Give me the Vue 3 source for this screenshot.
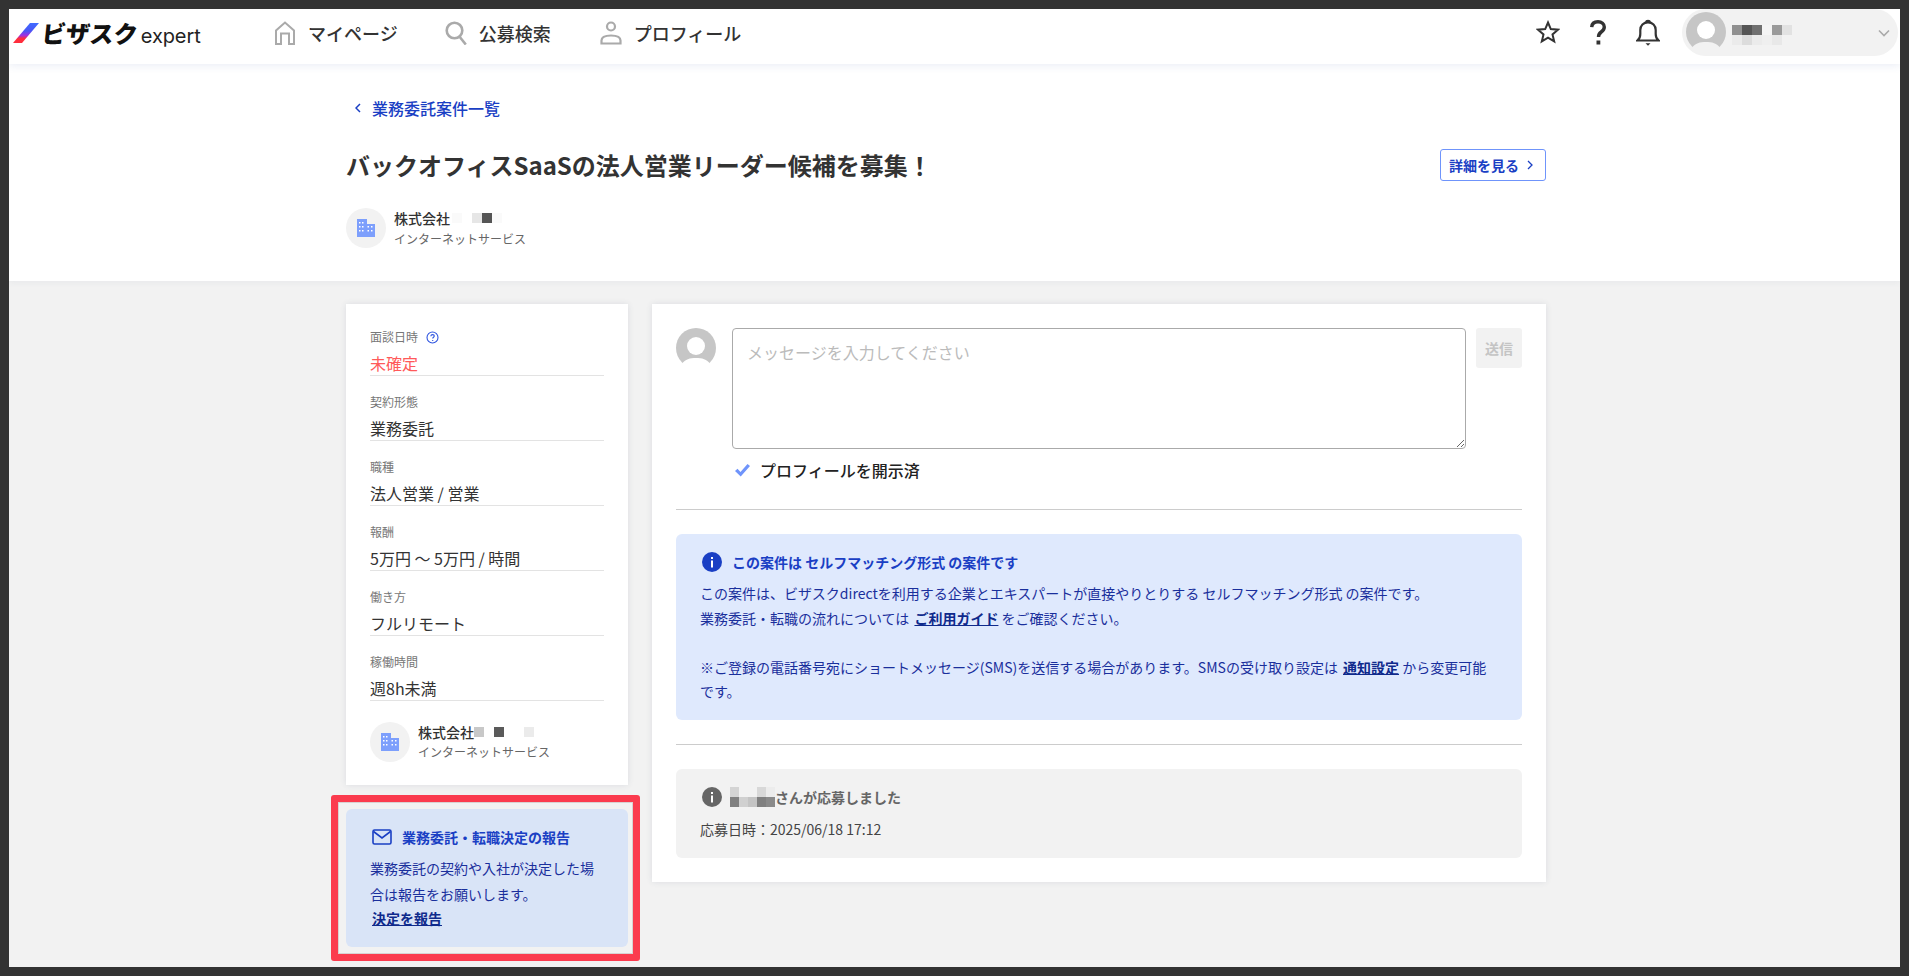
<template>
  <div class="frame">
    <div class="page">
      <header class="topbar">
        <div class="logo">
          <svg class="logo-mark" width="26" height="20" viewBox="0 0 26 20">
            <defs>
              <linearGradient id="slash" x1="0" y1="0" x2="0" y2="1">
                <stop offset="0" stop-color="#3f6bff" />
                <stop offset="0.4" stop-color="#4a55f5" />
                <stop offset="0.62" stop-color="#a030e0" />
                <stop offset="0.78" stop-color="#ff2d3c" />
                <stop offset="1" stop-color="#ff2d3c" />
              </linearGradient>
            </defs>
            <polygon points="17,0 26,0 9,20 0,20" fill="url(#slash)" />
          </svg>
          <span class="logo-main">ビザスク</span>
          <span class="logo-sub">expert</span>
        </div>
        <nav class="nav">
          <a class="nav-item nav-home">
            <svg width="22" height="24" viewBox="0 0 22 24" fill="none" stroke="#aaa" stroke-width="2">
              <path d="M2 23V9.500L11 1.500l9 8V23h-5V12.500H7V23z" />
            </svg>
            <span>マイページ</span>
          </a>
          <a class="nav-item nav-search">
            <svg width="22" height="24" viewBox="0 0 22 24" fill="none" stroke="#aaa" stroke-width="2.600">
              <circle cx="9.500" cy="9.500" r="7.800" />
              <path d="M14.800 16l6 7.500" />
            </svg>
            <span>公募検索</span>
          </a>
          <a class="nav-item nav-profile">
            <svg width="22" height="24" viewBox="0 0 22 24" fill="none" stroke="#aaa" stroke-width="2.200">
              <circle cx="11" cy="5.500" r="4" />
              <path d="M1.500 22.500v-3c0-3.500 3-5 9.500-5s9.500 1.500 9.500 5v3z" />
            </svg>
            <span>プロフィール</span>
          </a>
        </nav>
        <div class="top-right">
          <svg class="top-icon star" width="24" height="24" viewBox="0 0 24 24" fill="none" stroke="#333" stroke-width="2">
            <path d="M12 2.500l2.800 6.600 7.200.6-5.500 4.700 1.700 7-6.200-3.700-6.200 3.700 1.700-7L2 9.700l7.200-.6z" />
          </svg>
          <svg class="top-icon help" width="16" height="25" viewBox="0 0 16 25" fill="none" stroke="#333" stroke-width="3.400">
            <path d="M1.700 7.200C1.900 3.600 4.300 1.800 8 1.800c3.700 0 6.300 2.100 6.300 5.200 0 2.500-1.300 3.700-3.100 5-1.800 1.300-2.700 2.400-2.700 5" />
            <rect x="6.500" y="20.500" width="3.800" height="4" fill="#333" stroke="none" />
          </svg>
          <svg class="top-icon bell" width="24" height="27" viewBox="0 0 24 27" fill="none" stroke="#333" stroke-width="2.200">
            <path d="M1.500 21.500c2-1.500 2.800-3.500 2.800-6.500v-4c0-4.500 3.200-7.600 7.700-7.600s7.700 3.100 7.700 7.600v4c0 3 .8 5 2.800 6.500z" />
            <path d="M10 3.400c.3-2 3.700-2 4 0" />
            <path d="M9.500 24.200h5l-2.500 2.600z" fill="#333" stroke="none" />
          </svg>
          <div class="user-pill">
            <div class="avatar avatar-top">
              <svg width="40" height="40" viewBox="0 0 40 40">
                <circle cx="20" cy="20" r="20" fill="#c6c6c6" />
                <circle cx="20" cy="18" r="9" fill="#fff" />
                <path d="M6 36c3-5 8-6 14-6s11 1 14 6a20 20 0 0 1-28 0z" fill="#f2f2f2" />
              </svg>
            </div>
            <div class="mosaic user-mosaic">
              <i v-for="(c, i) in userPixels" :key="i" :style="{ background: c }"></i>
            </div>
            <svg class="pill-chevron" width="12" height="8" viewBox="0 0 12 8" fill="none" stroke="#aaa" stroke-width="1.600">
              <path d="M1 1.500l5 5 5-5" />
            </svg>
          </div>
        </div>
      </header>

      <section class="hero">
        <div class="wrap">
          <a class="back-link">
            <svg width="6" height="10" viewBox="0 0 6 10" fill="none" stroke="#1a3fc4" stroke-width="1.500">
              <path d="M5 1L1 5l4 4" />
            </svg>
            <span>業務委託案件一覧</span>
          </a>
          <div class="title-row">
            <h1 class="title">バックオフィスSaaSの法人営業リーダー候補を募集！</h1>
            <a class="detail-btn">
              <span>詳細を見る</span>
              <svg width="6" height="10" viewBox="0 0 6 10" fill="none" stroke="#1a3fc4" stroke-width="1.300">
                <path d="M1 1l4 4-4 4" />
              </svg>
            </a>
          </div>
          <div class="company company-hero">
            <div class="company-icon">
              <svg width="20" height="18" viewBox="0 0 20 18"><use href="#building" /></svg>
            </div>
            <div class="company-text">
              <div class="company-name">
                株式会社
                <span class="mosaic hero-mosaic">
                  <i v-for="(c, i) in heroPixels" :key="i" :style="{ background: c }"></i>
                </span>
              </div>
              <div class="company-type">インターネットサービス</div>
            </div>
          </div>
        </div>
      </section>

      <svg width="0" height="0" class="defs">
        <symbol id="building" viewBox="0 0 20 18">
          <path fill="#7d9ffc" d="M1 0h10v5h8v13H1z" />
          <g fill="#fff">
            <rect x="3" y="3" width="1.500" height="1.500" /><rect x="6" y="3" width="1.500" height="1.500" />
            <rect x="3" y="7" width="1.500" height="1.500" /><rect x="6" y="7" width="1.500" height="1.500" />
            <rect x="3" y="11" width="1.500" height="1.500" /><rect x="6" y="11" width="1.500" height="1.500" />
            <rect x="11.500" y="7" width="1.500" height="1.500" /><rect x="15" y="7" width="1.500" height="1.500" />
            <rect x="11.500" y="11" width="1.500" height="1.500" /><rect x="15" y="11" width="1.500" height="1.500" />
          </g>
        </symbol>
      </svg>

      <main class="wrap content">
        <aside class="side">
          <div class="card info-card">
            <div v-for="f in fields" :key="f.label" class="field">
              <div class="field-label">
                {{ f.label }}
                <svg v-if="f.help" class="help-icon" width="13" height="13" viewBox="0 0 13 13" fill="none" stroke="#2f55e0" stroke-width="1.100">
                  <circle cx="6.500" cy="6.500" r="5.500" />
                  <path d="M4.800 5.200c.1-1 .8-1.600 1.800-1.600s1.700.6 1.700 1.400c0 1.200-1.600 1.300-1.600 2.600" />
                  <path d="M6.700 9v1" />
                </svg>
              </div>
              <div class="field-value" :class="{ 'is-alert': f.alert }">{{ f.value }}</div>
            </div>
            <div class="company company-side">
              <div class="company-icon">
                <svg width="20" height="18" viewBox="0 0 20 18"><use href="#building" /></svg>
              </div>
              <div>
                <div class="company-name">
                  株式会社<span class="mosaic side-mosaic">
                    <i v-for="(c, i) in sidePixels" :key="i" :style="{ background: c }"></i>
                  </span>
                </div>
                <div class="company-type">インターネットサービス</div>
              </div>
            </div>
          </div>

          <div class="report">
            <div class="report-title">
              <svg width="20" height="16" viewBox="0 0 20 16" fill="none" stroke="#1a3fc4" stroke-width="1.600">
                <rect x="1" y="1" width="18" height="14" rx="1.500" />
                <path d="M1.500 2.500L10 9l8.500-6.500" />
              </svg>
              <span>業務委託・転職決定の報告</span>
            </div>
            <p class="report-text">業務委託の契約や入社が決定した場合は報告をお願いします。</p>
            <a class="report-link">決定を報告</a>
            <div class="annotation"></div>
          </div>
        </aside>

        <section class="card main-card">
          <div class="composer">
            <div class="avatar avatar-main">
              <svg width="40" height="40" viewBox="0 0 40 40">
                <circle cx="20" cy="20" r="20" fill="#c6c6c6" />
                <circle cx="20" cy="18" r="9" fill="#fff" />
                <path d="M6 36c3-5 8-6 14-6s11 1 14 6a20 20 0 0 1-28 0z" fill="#fff" />
              </svg>
            </div>
            <div class="composer-body">
              <textarea class="message" placeholder="メッセージを入力してください"></textarea>
              <div class="disclosed">
                <svg width="15" height="13" viewBox="0 0 15 13" fill="#6f94fb">
                  <path d="M0 7l2.500-2.300L5.500 8 12.500 0 15 2 5.700 12.500z" />
                </svg>
                <span>プロフィールを開示済</span>
              </div>
            </div>
            <button class="send" disabled>送信</button>
          </div>
          <hr class="divider divider-top" />
          <div class="notice">
            <div class="notice-title">
              <svg width="20" height="20" viewBox="0 0 20 20">
                <circle cx="10" cy="10" r="10" fill="#1a3fc4" />
                <rect x="9" y="8.500" width="2" height="7" fill="#fff" />
                <rect x="9" y="5" width="2" height="2" fill="#fff" />
              </svg>
              <span>この案件は セルフマッチング形式 の案件です</span>
            </div>
            <p class="notice-text">
              この案件は、ビザスクdirectを利用する企業とエキスパートが直接やりとりする セルフマッチング形式 の案件です。<br />
              業務委託・転職の流れについては <a>ご利用ガイド</a> をご確認ください。<br /><br />
              ※ご登録の電話番号宛にショートメッセージ(SMS)を送信する場合があります。SMSの受け取り設定は <a>通知設定</a> から変更可能です。
            </p>
          </div>
          <hr class="divider divider-bottom" />
          <div class="applied">
            <div class="applied-title">
              <svg width="20" height="20" viewBox="0 0 20 20">
                <circle cx="10" cy="10" r="10" fill="#666" />
                <rect x="9" y="8.500" width="2" height="7" fill="#fff" />
                <rect x="9" y="5" width="2" height="2" fill="#fff" />
              </svg>
              <span class="mosaic applied-mosaic">
                <i v-for="(c, i) in appliedPixels" :key="i" :style="{ background: c }"></i>
              </span>
              <span>さんが応募しました</span>
            </div>
            <div class="applied-date">応募日時：2025/06/18 17:12</div>
          </div>
        </section>
      </main>
    </div>
  </div>
</template>

<script setup>
const fields = [
  { label: '面談日時', value: '未確定', help: true, alert: true },
  { label: '契約形態', value: '業務委託' },
  { label: '職種', value: '法人営業 / 営業' },
  { label: '報酬', value: '5万円 〜 5万円 / 時間' },
  { label: '働き方', value: 'フルリモート' },
  { label: '稼働時間', value: '週8h未満' },
]

// blurred-out names, one colour per mosaic cell
const userPixels = [
  '#909090', '#555555', '#707070', '#f4f4f4', '#9a9a9a', '#e2e2e2',
  '#ebebeb', '#dcdcdc', '#ebebeb', '#efefef', '#e8e8e8', '#f2f2f2',
]
const heroPixels = ['#fafafa', '#ffffff', '#e6e6e6', '#555555', '#fafafa']
const sidePixels = ['#c8c8c8', '#ffffff', '#5a5a5a', '#ffffff', '#ffffff', '#ebebeb']
const appliedPixels = [
  '#d4d4d4', '#f2f2f2', '#f2f2f2', '#d8d8d8', '#ececec',
  '#808080', '#d0d0d0', '#c4c4c4', '#808080', '#8a8a8a',
]
</script>

<style>
html,
body {
  margin: 0;
  height: 976px;
  overflow: hidden;
}
</style>

<style scoped>
.frame {
  height: 976px;
  box-sizing: border-box;
  padding: 9px;
  background: #333;
  font-family: "Noto Sans CJK JP", "Noto Sans", sans-serif;
  color: #333;
}
.page {
  height: 958px;
  overflow: hidden;
  background: #f2f2f2;
}
.defs {
  position: absolute;
}
.topbar {
  display: flex;
  align-items: center;
  height: 55px;
  box-sizing: border-box;
  padding-bottom: 7px;
  background: #fff;
  box-shadow: 0 2px 8px rgba(60, 90, 170, 0.1);
  position: relative;
}
.logo {
  display: flex;
  align-items: center;
  width: 265px;
  padding-left: 4px;
  box-sizing: border-box;
}
.logo-mark {
  flex: none;
}
.logo-main {
  margin-left: 3px;
  font-size: 24px;
  font-weight: 900;
  color: #111;
  line-height: 30px;
  transform: skewX(-6deg);
}
.logo-sub {
  margin-left: 3px;
  margin-top: 5px;
  font-family: "Inter", sans-serif;
  font-size: 20px;
  color: #222;
  letter-spacing: -0.1px;
}
.nav {
  display: flex;
  align-items: center;
}
.nav-item {
  display: flex;
  align-items: center;
  gap: 12px;
  font-size: 18px;
  font-weight: 500;
  color: #333;
}
.nav-search {
  margin-left: 47px;
}
.nav-profile {
  margin-left: 49px;
}
.top-right {
  margin-left: auto;
  display: flex;
  align-items: flex-start;
  height: 55px;
  margin-bottom: -7px;
  padding-right: 2px;
}
.top-icon {
  flex: none;
}
.star {
  margin: 11px 30px 0 0;
}
.help {
  margin: 11px 30px 0 0;
}
.bell {
  margin: 10px 22px 0 0;
}
.user-pill {
  display: flex;
  align-items: flex-start;
  width: 216px;
  height: 47px;
  box-sizing: border-box;
  padding: 3px 8px 0 4px;
  background: #f2f2f2;
  border-radius: 24px;
}
.avatar {
  width: 40px;
  height: 40px;
  flex: none;
}
.avatar-top svg,
.avatar-main svg {
  display: block;
}
.mosaic {
  display: inline-grid;
  line-height: 0;
}
.mosaic i {
  display: block;
}
.user-mosaic {
  grid-template-columns: repeat(6, 10px);
  grid-auto-rows: 10px;
  margin: 13px 0 0 6px;
}
.pill-chevron {
  margin: 17px 0 0 auto;
}

.hero {
  height: 217px;
  background: #fff;
  box-shadow: 0 2px 6px rgba(60, 70, 110, 0.05);
}
.wrap {
  width: 1200px;
  margin-left: 337px;
}
.back-link {
  display: flex;
  align-items: center;
  gap: 11px;
  padding: 32px 0 0 9px;
  font-size: 16px;
  line-height: 24px;
  font-weight: 500;
  color: #1a3fc4;
}
.title-row {
  display: flex;
  justify-content: space-between;
  align-items: center;
  margin-top: 25px;
  height: 40px;
}
.title {
  margin: 0;
  font-size: 24px;
  line-height: 40px;
  font-weight: 700;
  color: #333;
}
.detail-btn {
  display: flex;
  align-items: center;
  justify-content: space-between;
  width: 106px;
  height: 32px;
  box-sizing: border-box;
  padding: 0 12px 0 8px;
  border: 1px solid #6f94fb;
  border-radius: 3px;
  font-size: 14px;
  font-weight: 700;
  color: #1a3fc4;
}
.company {
  display: flex;
  align-items: center;
  gap: 8px;
}
.company-hero {
  margin-top: 22px;
}
.company-hero .company-text {
  padding-top: 1px;
}
.company-hero .company-type {
  margin-top: 1px;
}
.company-icon {
  display: flex;
  align-items: center;
  justify-content: center;
  width: 40px;
  height: 40px;
  flex: none;
  border-radius: 50%;
  background: #f2f2f2;
}
.company-name {
  display: flex;
  align-items: center;
  height: 20px;
  font-size: 14px;
  font-weight: 500;
  color: #333;
}
.company-type {
  font-size: 12px;
  line-height: 20px;
  color: #666;
}
.hero-mosaic {
  grid-template-columns: repeat(5, 10px);
  grid-auto-rows: 10px;
  margin-left: 2px;
}

.content {
  display: flex;
  align-items: flex-start;
  gap: 24px;
  padding-top: 23px;
}
.side {
  width: 282px;
  flex: none;
}
.card {
  background: #fff;
  box-shadow: 0 0 6px rgba(60, 70, 110, 0.12);
}
.info-card {
  padding: 24px;
  height: 481px;
  box-sizing: border-box;
}
.field {
  margin-bottom: 17px;
}
.field-label {
  display: flex;
  align-items: center;
  gap: 8px;
  font-size: 12px;
  line-height: 18px;
  color: #777;
}
.field-value {
  margin-top: 6px;
  font-size: 16px;
  line-height: 23px;
  color: #333;
  border-bottom: 1px solid #e3e3e3;
}
.is-alert {
  color: #ff5a5a;
}
.company-side {
  margin-top: 21px;
}
.side-mosaic {
  grid-template-columns: repeat(6, 10px);
  grid-auto-rows: 10px;
}
.report {
  position: relative;
  margin-top: 24px;
  height: 138px;
  box-sizing: border-box;
  padding: 19px 24px 0;
  background: #d9e4f7;
  border-radius: 6px;
  color: #1a2f9c;
}
.report-title {
  display: flex;
  align-items: center;
  gap: 10px;
  padding-left: 2px;
  font-size: 14px;
  font-weight: 700;
  line-height: 18px;
  color: #1a3fc4;
}
.report-text {
  margin: 10px 0 0;
  font-size: 14px;
  line-height: 25.5px;
}
.report-link {
  display: block;
  margin: -1px 0 0 2px;
  font-size: 14px;
  line-height: 24px;
  font-weight: 700;
  text-decoration: underline;
  color: #0f2a8c;
}
.annotation {
  position: absolute;
  top: -14px;
  left: -15px;
  right: -12px;
  bottom: -14px;
  border: 7px solid #fb3b4e;
  border-radius: 3px;
  box-shadow: inset 0 0 0 1px #d8d2d2;
  pointer-events: none;
}

.main-card {
  width: 894px;
  height: 578px;
  box-sizing: border-box;
  padding: 24px;
}
.composer {
  display: flex;
  align-items: flex-start;
  height: 157px;
}
.composer-body {
  margin-left: 16px;
  width: 734px;
  flex: none;
}
.message {
  display: block;
  width: 100%;
  height: 121px;
  box-sizing: border-box;
  padding: 11px 14px;
  border: 1px solid #aaa;
  border-radius: 4px;
  font-family: inherit;
  font-size: 16px;
  line-height: 24px;
  resize: vertical;
  outline: none;
}
.message::placeholder {
  color: #bbb;
}
.disclosed {
  display: flex;
  align-items: center;
  gap: 10px;
  margin-top: 9px;
  padding-left: 3px;
  font-size: 16px;
  line-height: 24px;
  font-weight: 500;
  color: #222;
}
.send {
  width: 46px;
  height: 40px;
  margin-left: 10px;
  padding: 0;
  border: none;
  border-radius: 3px;
  background: #f2f2f2;
  font-family: inherit;
  font-size: 14px;
  font-weight: 700;
  color: #c4c4c4;
}
.divider {
  margin: 0;
  border: none;
  border-top: 1px solid #ccc;
}
.divider-top {
  margin-top: 24px;
}
.notice {
  margin-top: 24px;
  height: 186px;
  box-sizing: border-box;
  padding: 18px 24px 0;
  background: #dfe9fd;
  border-radius: 6px;
  color: #1a2f9c;
}
.notice-title {
  display: flex;
  align-items: center;
  gap: 10px;
  padding-left: 2px;
  font-size: 14px;
  font-weight: 700;
  line-height: 20px;
  color: #1a3fc4;
}
.notice-text {
  margin: 9px 0 0;
  font-size: 14px;
  line-height: 24.5px;
}
.notice-text a {
  margin-left: 2px;
  font-weight: 700;
  text-decoration: underline;
  color: #0f2a8c;
}
.divider-bottom {
  margin-top: 24px;
}
.applied {
  margin-top: 24px;
  height: 89px;
  box-sizing: border-box;
  padding: 18px 24px 0;
  background: #f2f2f2;
  border-radius: 6px;
}
.applied-title {
  display: flex;
  align-items: center;
  padding-left: 2px;
  font-size: 14px;
  font-weight: 700;
  line-height: 20px;
  color: #666;
}
.applied-mosaic {
  grid-template-columns: repeat(5, 9px);
  grid-auto-rows: 10px;
  margin-left: 8px;
}
.applied-date {
  margin-top: 10px;
  font-size: 14px;
  line-height: 24px;
  color: #444;
}
</style>
